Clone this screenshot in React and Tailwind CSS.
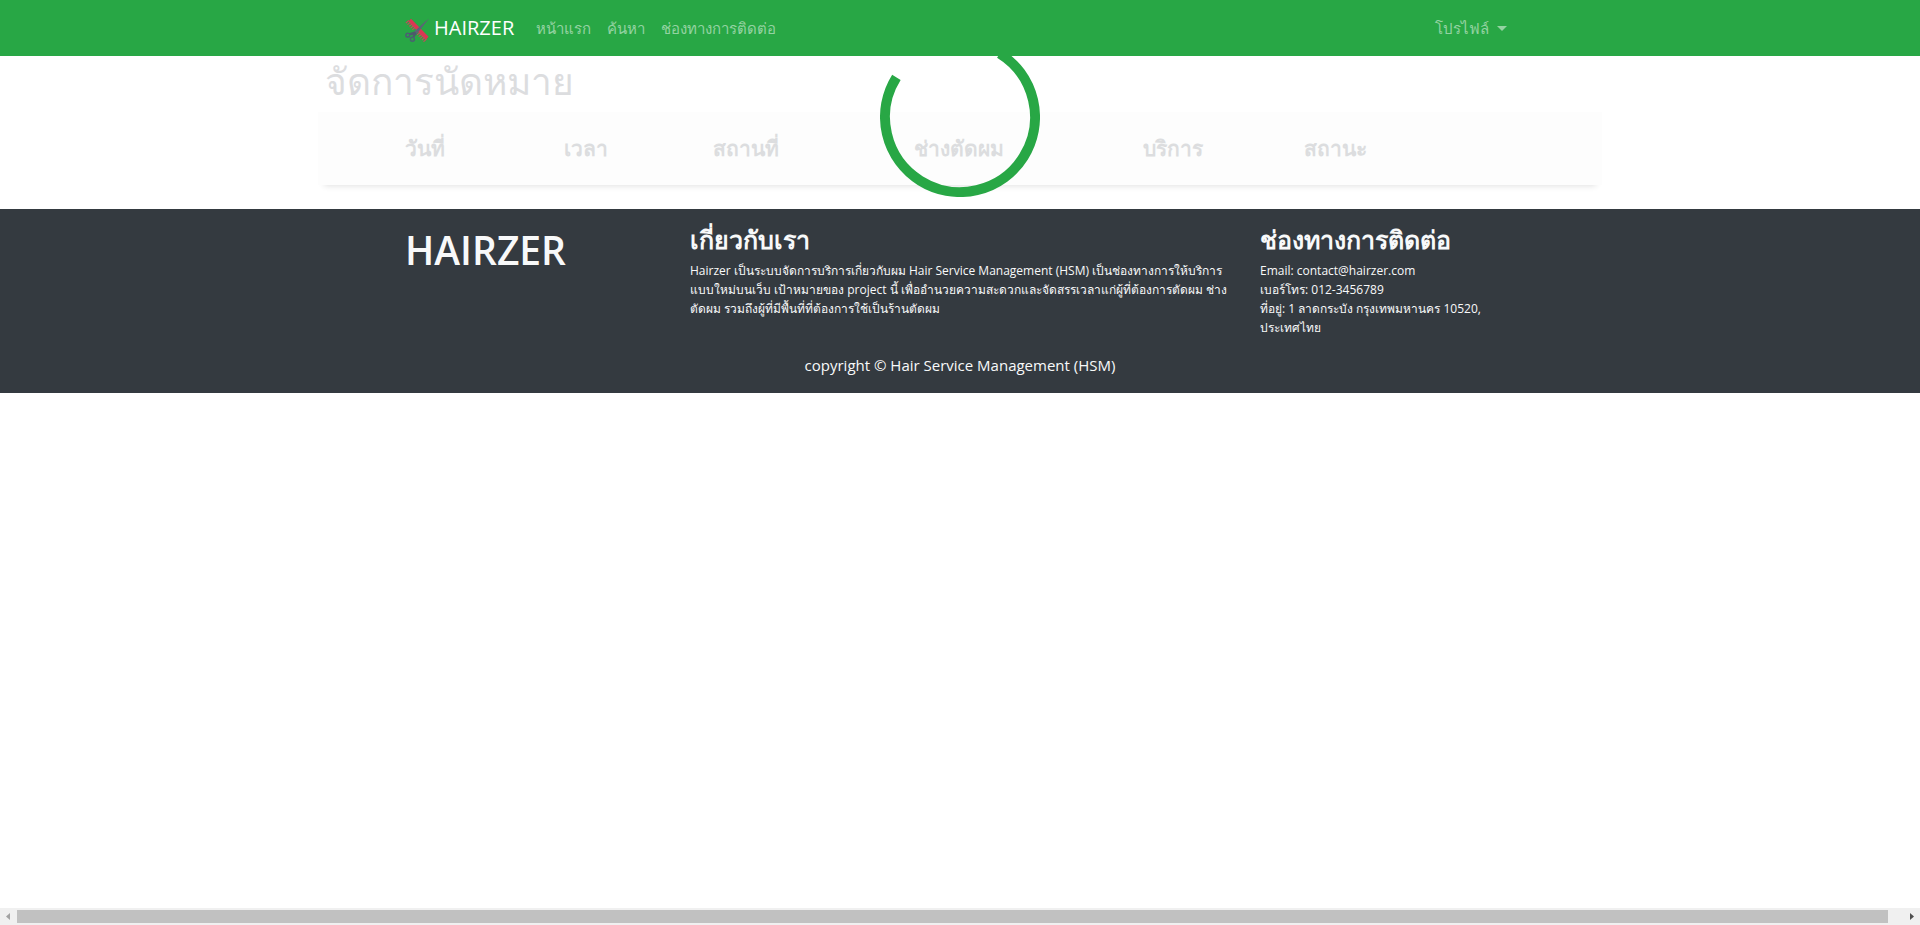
const columns = [
  { label: 'วันที่', width: 'w-[159px]' },
  { label: 'เวลา', width: 'w-[149px]' },
  { label: 'สถานที่', width: 'w-[201px]' },
  { label: 'ช่างตัดผม', width: 'w-[229px]' },
  { label: 'บริการ', width: 'w-[161px]' },
  { label: 'สถานะ', width: 'w-auto' },
];

function Logo() {
  return (
    <svg viewBox="0 0 24 24" className="size-6" aria-hidden="true">
      <path d="M3.400 3.400 6 .8 23.600 18.800l-3 3.200z" fill="#dc3553" />
      <path
        d="m.9 5 3-2.600M2.500 6.700l3-2.600M4.100 8.400l3-2.600M5.700 10.100l3-2.600M7.300 11.800l3-2.600M10.500 15.200l3-2.600M12.100 16.900l3-2.600M13.700 18.600l3-2.600M15.300 20.300l3-2.600M16.900 22l3-2.600M18.500 23.700l3-2.600"
        stroke="#c9485a"
        strokeWidth="1.100"
      />
      <path d="M24 .6 11.600 16.200 8.800 14 20.200 3.400z" fill="#5b6475" />
      <path d="m3.600 15.200 6.200-1.600 2 2.200-3.400 4.800-1.500-.6 1.300-2.900-3.400.1z" fill="#4b5a6b" />
      <circle cx="2.800" cy="17.200" r="1.900" fill="#28a745" stroke="#4b6072" strokeWidth="1.500" />
      <circle cx="7.400" cy="21.200" r="2" fill="#28a745" stroke="#4b6072" strokeWidth="1.500" />
    </svg>
  );
}

function Navbar() {
  return (
    <nav className="relative z-20 h-14 bg-[#28a745]">
      <div className="mx-auto flex h-full max-w-[1140px] items-center px-[15px]">
        <a href="#" className="mr-[14px] flex items-center gap-[5px] text-[20px] text-white">
          <span className="mt-1"><Logo /></span>
          HAIRZER
        </a>
        <div className="flex text-[15px] text-white/50">
          <a href="#" className="px-2">หน้าแรก</a>
          <a href="#" className="px-2">ค้นหา</a>
          <a href="#" className="px-2">ช่องทางการติดต่อ</a>
        </div>
        <button type="button" className="ml-auto flex items-center gap-2 px-2 text-[15px] text-white/50">
          โปรไฟล์
          <svg viewBox="0 0 10 5" className="w-[10px]" aria-hidden="true">
            <path d="M0 0h10L5 5z" fill="currentColor" />
          </svg>
        </button>
      </div>
    </nav>
  );
}

function Spinner() {
  return (
    <div role="status" className="absolute inset-x-0 -top-[19px] z-10 flex justify-center">
      <svg viewBox="-80 -80 160 160" className="size-40" aria-hidden="true">
        <path d="M39.7-63.6A75 75 0 1 1-63.6-39.7" fill="none" stroke="#28a745" strokeWidth="10" />
      </svg>
    </div>
  );
}

function Footer() {
  return (
    <footer className="bg-[#343a40] pt-4 pb-4 text-[#f8f9fa]">
      <div className="mx-auto grid max-w-[1140px] grid-cols-4">
        <h2 className="px-[15px] text-[39px] leading-[50px] font-semibold">HAIRZER</h2>
        <section className="col-span-2 px-[15px]">
          <h3 className="mb-[7px] text-[25px] leading-[29px] font-bold">เกี่ยวกับเรา</h3>
          <p className="text-[12px] leading-[19px]">
            Hairzer เป็นระบบจัดการบริการเกี่ยวกับผม Hair Service Management (HSM) เป็นช่องทางการให้บริการแบบใหม่บนเว็บ เป้าหมายของ project นี้ เพื่ออำนวยความสะดวกและจัดสรรเวลาแก่ผู้ที่ต้องการตัดผม ช่างตัดผม รวมถึงผู้ที่มีพื้นที่ที่ต้องการใช้เป็นร้านตัดผม
          </p>
        </section>
        <section className="px-[15px]">
          <h3 className="mb-[7px] text-[25px] leading-[29px] font-bold">ช่องทางการติดต่อ</h3>
          <address className="text-[12px] leading-[19px] not-italic">
            <p>Email: contact@hairzer.com</p>
            <p>เบอร์โทร: 012-3456789</p>
            <p>ที่อยู่: 1 ลาดกระบัง กรุงเทพมหานคร 10520, ประเทศไทย</p>
          </address>
        </section>
      </div>
      <p className="mt-4 text-center text-[15px] leading-6">copyright © Hair Service Management (HSM)</p>
    </footer>
  );
}

function ScrollBar() {
  return (
    <div className="mt-auto flex h-[17px] items-center bg-[#f0f0f0]" aria-hidden="true">
      <svg viewBox="0 0 17 17" className="size-[17px]">
        <path d="M10 5v7L6 8.500z" fill="#a3a3a3" />
      </svg>
      <div className="mr-[15px] h-[13px] flex-1 bg-[#c1c1c1]" />
      <svg viewBox="0 0 17 17" className="size-[17px]">
        <path d="M7 5v7l4-3.500z" fill="#505050" />
      </svg>
    </div>
  );
}

export default function App() {
  return (
    <div className="flex min-h-screen flex-col bg-white font-['Open_Sans','Noto_Sans',sans-serif]">
      <Navbar />
      <main className="relative pb-6">
        <Spinner />
        <div className="mx-auto max-w-[1284px] text-[#dcdddf]">
          <h1 className="mb-[6px] px-[7px] text-[37px] leading-[50px]">จัดการนัดหมาย</h1>
          <div className="bg-[#fdfdfd] px-[87px] py-[22px] shadow-[0_7px_6px_-6px_rgba(0,0,0,0.12)]">
            <table className="w-full table-fixed text-left text-[21px] leading-[29px]">
              <thead>
                <tr>
                  {columns.map((column) => (
                    <th key={column.label} scope="col" className={`${column.width} font-bold`}>
                      {column.label}
                    </th>
                  ))}
                </tr>
              </thead>
            </table>
          </div>
        </div>
      </main>
      <Footer />
      <ScrollBar />
    </div>
  );
}
